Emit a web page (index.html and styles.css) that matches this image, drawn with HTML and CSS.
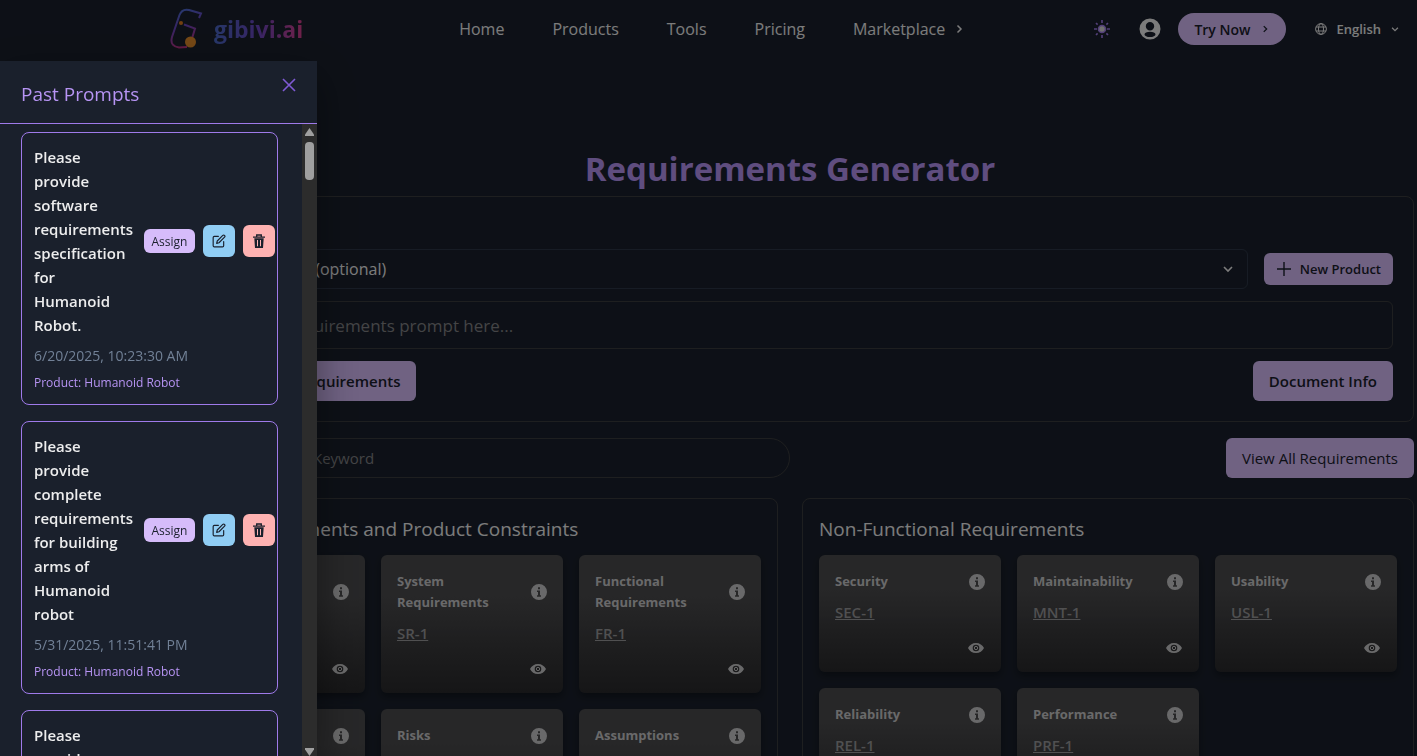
FILE: index.html
```
<!DOCTYPE html>
<html lang="en">
<head>
  <meta charset="UTF-8" />
  <meta name="viewport" content="width=device-width, initial-scale=1.0" />
  <title>Requirements Generator</title>
  <link rel="stylesheet" href="styles.css">
</head>
<body>
  <!-- shared icons -->
  <svg class="sprite" width="0" height="0" aria-hidden="true">
    <symbol id="chevron" viewBox="0 0 24 24"><path d="M9 5l7 7-7 7" fill="none" stroke="currentColor" stroke-width="3" /></symbol>
    <symbol id="down" viewBox="0 0 24 24"><path d="M5 9l7 7 7-7" fill="none" stroke="currentColor" stroke-width="3" /></symbol>
    <symbol id="plus" viewBox="0 0 16 16"><path d="M8 1v14M1 8h14" fill="none" stroke="currentColor" stroke-width="1.4" /></symbol>
    <symbol id="info" viewBox="0 0 16 16"><path fill="currentColor" fill-rule="evenodd" d="M8 0a8 8 0 1 0 0 16A8 8 0 0 0 8 0zM7 3.2h2v2H7zM6 6.4h3v4.8h1v1.5H6v-1.5h1V7.9H6z" /></symbol>
    <symbol id="eye" viewBox="0 0 16 16"><path fill="currentColor" fill-rule="evenodd" d="M8 3C4.400 3 1.400 5 0 8c1.400 3 4.400 5 8 5s6.600-2 8-5c-1.400-3-4.400-5-8-5zm0 1.700a3.300 3.300 0 1 1 0 6.600 3.300 3.300 0 0 1 0-6.600z" /><circle cx="8" cy="8" r="1.700" fill="none" stroke="currentColor" stroke-width="1" /></symbol>
    <symbol id="edit" viewBox="0 0 24 24"><path d="M11 4H4a2 2 0 0 0-2 2v14a2 2 0 0 0 2 2h14a2 2 0 0 0 2-2v-7M18.500 2.500a2.100 2.100 0 0 1 3 3L12 15l-4 1 1-4z" fill="none" stroke="currentColor" stroke-width="2" stroke-linecap="round" stroke-linejoin="round" /></symbol>
    <symbol id="trash" viewBox="0 0 14 14"><path d="M1 3.200h12M4.700 3V1h4.600v2" fill="none" stroke="currentColor" stroke-width="1.300" /><path fill="currentColor" fill-rule="evenodd" d="M2.300 4.300h9.400L11 14H3zM5 6v6.300h1V6zM8 6v6.300h1V6z" /></symbol>
  </svg>

  <header class="navbar">
    <a class="logo" href="#">
      <svg width="34" height="42" viewBox="0 0 34 42" aria-hidden="true">
        <defs>
          <linearGradient id="mark" x1="0" y1="0" x2="0.300" y2="1">
            <stop offset="0" stop-color="#4574d8" />
            <stop offset="0.500" stop-color="#6b46c1" />
            <stop offset="1" stop-color="#b83280" />
          </linearGradient>
        </defs>
        <path d="M29 10l2-4.500-12-3.500C14 .8 11 3 9.500 7L2 29c-2 7 2 10 7 10.500l8-.5M14 16.500l11 4-3 10" fill="none" stroke="url(#mark)" stroke-width="2" />
        <circle cx="11" cy="15" r="2" fill="#dd7a20" />
        <circle cx="20.500" cy="34" r="5.500" fill="#e08a2a" />
      </svg>
      <span class="brand">gibivi.ai</span>
    </a>
    <nav class="links">
      <a href="#">Home</a>
      <a href="#">Products</a>
      <a href="#">Tools</a>
      <a href="#">Pricing</a>
      <a href="#" class="market">Marketplace <svg width="12" height="12"><use href="#chevron" /></svg></a>
    </nav>
    <div class="actions">
      <button class="icon-btn sun" aria-label="Toggle theme">
        <svg width="20" height="20" viewBox="0 0 20 20">
          <circle cx="10" cy="10" r="3.500" fill="#d6d6d6" stroke="#9f7aea" stroke-width="1.600" />
          <path d="M10 1v3M10 16v3M2 10h3M15 10h3M4 4l1.600 1.600M14.400 14.400L16 16M4 16l1.600-1.600M14.400 5.600L16 4" stroke="#9f7aea" stroke-width="1.600" />
        </svg>
      </button>
      <button class="icon-btn user" aria-label="Account">
        <svg width="22" height="22" viewBox="0 0 22 22">
          <path fill="currentColor" fill-rule="evenodd" d="M11 0.500a10.500 10.500 0 1 0 0 21 10.500 10.500 0 0 0 0-21zm0 3.500a4.200 4.200 0 1 1 0 8.400A4.200 4.200 0 0 1 11 4zm0 9.800c3 0 5.500 1 5.500 2.600 0 1.500-2.500 2.600-5.500 2.600s-5.500-1.100-5.500-2.600c0-1.600 2.500-2.600 5.500-2.600z" />
        </svg>
      </button>
      <button class="try">Try Now <svg width="10" height="10"><use href="#chevron" /></svg></button>
      <button class="lang">
        <svg width="12" height="12" viewBox="0 0 12 12" fill="none" stroke="currentColor"><circle cx="6" cy="6" r="5.400" /><ellipse cx="6" cy="6" rx="2.500" ry="5.400" /><path d="M1 4h10M1 8h10" /></svg>
        English
        <svg width="10" height="10"><use href="#down" /></svg>
      </button>
    </div>
  </header>

  <main class="content">
    <h1>Requirements Generator</h1>

    <section class="form-box">
      <div class="row">
        <select class="product-select" aria-label="Product">
          <option>Select Product (optional)</option>
        </select>
        <button class="btn btn-sm"><svg width="16" height="16"><use href="#plus" /></svg>New Product</button>
      </div>
      <input class="prompt" type="text" aria-label="Prompt" placeholder="Type your requirements prompt here...">
      <div class="row between">
        <button class="btn"><svg width="16" height="16"><use href="#plus" /></svg>Generate Requirements</button>
        <button class="btn">Document Info</button>
      </div>
    </section>

    <div class="row between search-row">
      <input class="search" type="text" aria-label="Search" placeholder="Search by ID or Keyword">
      <button class="btn btn-light">View All Requirements</button>
    </div>

    <div class="panels">
      <section class="panel">
        <h2>Basic Requirements and Product Constraints</h2>
        <div class="cards">
          <article class="card">
            <div class="card-head"><h3>Business Requirements</h3><svg width="16" height="16"><use href="#info" /></svg></div>
            <a href="#">BR-1</a>
            <svg class="eye" width="16" height="16"><use href="#eye" /></svg>
          </article>
          <article class="card">
            <div class="card-head"><h3>System Requirements</h3><svg width="16" height="16"><use href="#info" /></svg></div>
            <a href="#">SR-1</a>
            <svg class="eye" width="16" height="16"><use href="#eye" /></svg>
          </article>
          <article class="card">
            <div class="card-head"><h3>Functional Requirements</h3><svg width="16" height="16"><use href="#info" /></svg></div>
            <a href="#">FR-1</a>
            <svg class="eye" width="16" height="16"><use href="#eye" /></svg>
          </article>
          <article class="card">
            <div class="card-head"><h3>Constraints</h3><svg width="16" height="16"><use href="#info" /></svg></div>
            <a href="#">CON-1</a>
            <svg class="eye" width="16" height="16"><use href="#eye" /></svg>
          </article>
          <article class="card">
            <div class="card-head"><h3>Risks</h3><svg width="16" height="16"><use href="#info" /></svg></div>
            <a href="#">RSK-1</a>
            <svg class="eye" width="16" height="16"><use href="#eye" /></svg>
          </article>
          <article class="card">
            <div class="card-head"><h3>Assumptions</h3><svg width="16" height="16"><use href="#info" /></svg></div>
            <a href="#">ASM-1</a>
            <svg class="eye" width="16" height="16"><use href="#eye" /></svg>
          </article>
        </div>
      </section>

      <section class="panel">
        <h2>Non-Functional Requirements</h2>
        <div class="cards">
          <article class="card">
            <div class="card-head"><h3>Security</h3><svg width="16" height="16"><use href="#info" /></svg></div>
            <a href="#">SEC-1</a>
            <svg class="eye" width="16" height="16"><use href="#eye" /></svg>
          </article>
          <article class="card">
            <div class="card-head"><h3>Maintainability</h3><svg width="16" height="16"><use href="#info" /></svg></div>
            <a href="#">MNT-1</a>
            <svg class="eye" width="16" height="16"><use href="#eye" /></svg>
          </article>
          <article class="card">
            <div class="card-head"><h3>Usability</h3><svg width="16" height="16"><use href="#info" /></svg></div>
            <a href="#">USL-1</a>
            <svg class="eye" width="16" height="16"><use href="#eye" /></svg>
          </article>
          <article class="card">
            <div class="card-head"><h3>Reliability</h3><svg width="16" height="16"><use href="#info" /></svg></div>
            <a href="#">REL-1</a>
            <svg class="eye" width="16" height="16"><use href="#eye" /></svg>
          </article>
          <article class="card">
            <div class="card-head"><h3>Performance</h3><svg width="16" height="16"><use href="#info" /></svg></div>
            <a href="#">PRF-1</a>
            <svg class="eye" width="16" height="16"><use href="#eye" /></svg>
          </article>
        </div>
      </section>
    </div>
  </main>

  <div class="overlay"></div>

  <aside class="drawer">
    <div class="drawer-head">
      <h2>Past Prompts</h2>
      <button class="close" aria-label="Close">
        <svg width="14" height="14" viewBox="0 0 14 14"><path d="M1 1l12 12M13 1L1 13" stroke="currentColor" stroke-width="1.600" /></svg>
      </button>
    </div>
    <div class="drawer-body">
      <div class="prompts">
        <article class="prompt-card">
          <div class="prompt-row">
            <p class="prompt-text">Please provide software requirements specification for Humanoid Robot.</p>
            <button class="assign">Assign</button>
            <button class="edit" aria-label="Edit"><svg width="14" height="14"><use href="#edit" /></svg></button>
            <button class="delete" aria-label="Delete"><svg width="14" height="14"><use href="#trash" /></svg></button>
          </div>
          <p class="date">6/20/2025, 10:23:30 AM</p>
          <p class="product">Product: Humanoid Robot</p>
        </article>
        <article class="prompt-card">
          <div class="prompt-row">
            <p class="prompt-text">Please provide complete requirements for building arms of Humanoid robot</p>
            <button class="assign">Assign</button>
            <button class="edit" aria-label="Edit"><svg width="14" height="14"><use href="#edit" /></svg></button>
            <button class="delete" aria-label="Delete"><svg width="14" height="14"><use href="#trash" /></svg></button>
          </div>
          <p class="date">5/31/2025, 11:51:41 PM</p>
          <p class="product">Product: Humanoid Robot</p>
        </article>
        <article class="prompt-card">
          <div class="prompt-row">
            <p class="prompt-text">Please provide complete requirements for building arms of Humanoid robot</p>
            <button class="assign">Assign</button>
            <button class="edit" aria-label="Edit"><svg width="14" height="14"><use href="#edit" /></svg></button>
            <button class="delete" aria-label="Delete"><svg width="14" height="14"><use href="#trash" /></svg></button>
          </div>
          <p class="date">5/31/2025, 11:50:12 PM</p>
          <p class="product">Product: Humanoid Robot</p>
        </article>
      </div>
      <div class="scrollbar" aria-hidden="true">
        <svg width="9" height="8" viewBox="0 0 9 8"><path d="M4.500 0L9 6.500V8H0V6.500z" fill="currentColor" /></svg>
        <div class="thumb"></div>
        <svg class="arrow-down" width="9" height="8" viewBox="0 0 9 8"><path d="M4.500 8L9 1.500V0H0v1.500z" fill="currentColor" /></svg>
      </div>
    </div>
  </aside>
</body>
</html>
```
FILE: styles.css
```
* {
  box-sizing: border-box;
}

body {
  margin: 0;
  height: 100vh;
  overflow: hidden;
  font-family: "Open Sans", "Noto Sans", sans-serif;
  font-size: 15px;
  line-height: 24px;
  color: #ededee;
  background-color: #1a202c;
}

h1, h2, h3, p {
  margin: 0;
}

svg {
  flex: none;
}

a {
  color: inherit;
  text-decoration: none;
}

button, input, select {
  font-family: inherit;
  font-size: 15px;
  color: inherit;
}

button {
  display: flex;
  align-items: center;
  justify-content: center;
  border: none;
  padding: 0;
  background: none;
  white-space: nowrap;
  cursor: pointer;
}

.sprite {
  position: absolute;
}

/* top bar */
.navbar {
  display: flex;
  align-items: center;
  height: 58px;
  padding: 0 17px 0 170px;
}

.logo {
  display: flex;
  align-items: center;
  gap: 10px;
}

.brand {
  font-size: 23px;
  line-height: 32px;
  font-weight: 700;
  background: linear-gradient(90deg, #4a69c8, #6b46c1 50%, #d53f8c);
  -webkit-background-clip: text;
  background-clip: text;
  color: transparent;
}

.links {
  display: flex;
  gap: 48px;
  margin-left: 156px;
  font-size: 16px;
}

.market {
  display: flex;
  align-items: center;
  gap: 8px;
}

.actions {
  display: flex;
  align-items: center;
  margin-left: auto;
}

.user {
  margin: 0 17px 0 27px;
}

.try {
  gap: 10px;
  width: 108px;
  height: 32px;
  border-radius: 16px;
  font-size: 14px;
  font-weight: 600;
  color: #1a202c;
  background: #d6bcfa;
}

.lang {
  gap: 9px;
  margin-left: 29px;
  font-size: 13px;
  font-weight: 600;
}

/* page */
.content {
  padding: 84px 3px 0 166px;
}

h1 {
  font-size: 33px;
  line-height: 54px;
  font-weight: 700;
  text-align: center;
  color: #b794f4;
}

.form-box {
  display: flex;
  flex-direction: column;
  gap: 12px;
  padding: 52px 20px 20px;
  border: 1px solid #3b3c3e;
  border-radius: 8px;
}

.row {
  display: flex;
  align-items: center;
  gap: 16px;
}

.between {
  justify-content: space-between;
}

.product-select {
  flex: 1;
  height: 40px;
  padding: 0 16px;
  font-size: 16px;
  border: 1px solid #2d3748;
  border-radius: 6px;
  appearance: none;
  background: url("data:image/svg+xml,%3Csvg xmlns='http://www.w3.org/2000/svg' width='12' height='12' viewBox='0 0 12 12'%3E%3Cpath d='M2 4l4 4 4-4' fill='none' stroke='%23ededee' stroke-width='1.600'/%3E%3C/svg%3E") no-repeat right 13px center;
}

.prompt {
  height: 48px;
  padding: 0 16px;
  font-size: 17px;
  border: 1px solid #3b3c3e;
  border-radius: 6px;
  background: none;
}

.search {
  width: 50%;
  height: 40px;
  padding: 0 16px 0 36px;
  border: 1px solid #3b3c3e;
  border-radius: 20px;
  background: none;
}

::placeholder {
  color: #828386;
}

.btn {
  gap: 8px;
  height: 40px;
  padding: 0 16px;
  border-radius: 6px;
  font-weight: 600;
  color: #1a202c;
  background: #d6bcfa;
}

.btn-sm {
  height: 32px;
  padding: 0 12px;
  font-size: 13px;
}

.btn-light {
  font-weight: 400;
}

.search-row {
  margin-top: 16px;
}

.panels {
  display: grid;
  grid-template-columns: 1fr 1fr;
  gap: 24px;
  margin-top: 20px;
}

.panel {
  padding: 16px;
  border: 1px solid #3b3c3e;
  border-radius: 8px;
}

.panel h2 {
  font-size: 19px;
  line-height: 28px;
  font-weight: 400;
}

.cards {
  display: grid;
  grid-template-columns: repeat(3, 1fr);
  gap: 16px;
  margin-top: 12px;
}

.card {
  display: flex;
  flex-direction: column;
  align-items: flex-start;
  padding: 16px;
  border-radius: 6px;
  background: linear-gradient(#4b4b4d 30%, #2a2a2c);
  box-shadow: 0 4px 6px rgba(0, 0, 0, 0.3);
}

.card-head {
  display: flex;
  align-items: center;
  justify-content: space-between;
  gap: 16px;
  width: 100%;
  color: #cacacb;
}

.card h3 {
  font-size: 13px;
  line-height: 21px;
  font-weight: 700;
}

.card a {
  margin-top: 8px;
  font-weight: 600;
  color: #99999b;
  text-decoration: underline;
}

.eye {
  margin: 16px 1px 0 0;
  align-self: flex-end;
  color: #cacacb;
}

/* drawer */
.overlay {
  position: fixed;
  inset: 0;
  background: rgba(0, 0, 0, 0.48);
}

.drawer {
  position: fixed;
  top: 61px;
  bottom: 0;
  left: 0;
  display: flex;
  flex-direction: column;
  width: 317px;
  background: #1a202c;
  box-shadow: 0 15px 40px rgba(0, 0, 0, 0.4);
}

.drawer-head {
  display: flex;
  justify-content: space-between;
  padding: 17px 21px 13px;
  border-bottom: 1px solid #9f7aea;
}

.drawer-head h2 {
  font-size: 19px;
  line-height: 32px;
  font-weight: 400;
  color: #b794f4;
}

.close {
  align-self: flex-start;
  color: #805ad5;
}

.drawer-body {
  display: flex;
  flex: 1;
  min-height: 0;
}

.prompts {
  flex: 1;
  padding: 8px 24px 0 21px;
  overflow: hidden;
}

.prompt-card {
  margin-bottom: 16px;
  padding: 12px;
  border: 1px solid #9f7aea;
  border-radius: 8px;
}

.prompt-row {
  display: flex;
  align-items: center;
  gap: 8px;
}

.prompt-text {
  flex: none;
  width: 102px;
  padding-right: 2px;
  font-weight: 600;
}

.assign {
  flex: none;
  width: 51px;
  height: 24px;
  border-radius: 6px;
  font-size: 12px;
  color: #1a202c;
  background: #d6bcfa;
}

.edit, .delete {
  flex: none;
  width: 32px;
  height: 32px;
  border-radius: 6px;
  color: #1a202c;
}

.edit {
  background: #90cdf4;
}

.delete {
  background: #feb2b2;
}

.date {
  margin-top: 8px;
  font-size: 14px;
  line-height: 21px;
  color: #718096;
}

.product {
  margin-top: 8px;
  font-size: 12px;
  line-height: 18px;
  color: #b794f4;
}

.scrollbar {
  display: flex;
  flex-direction: column;
  align-items: center;
  width: 15px;
  padding-top: 4px;
  color: #9f9f9f;
  background: #2c2c2c;
}

.thumb {
  width: 9px;
  height: 38px;
  margin-top: 6px;
  border-radius: 4px;
  background: #9f9f9f;
}

.arrow-down {
  margin-top: auto;
}
```
